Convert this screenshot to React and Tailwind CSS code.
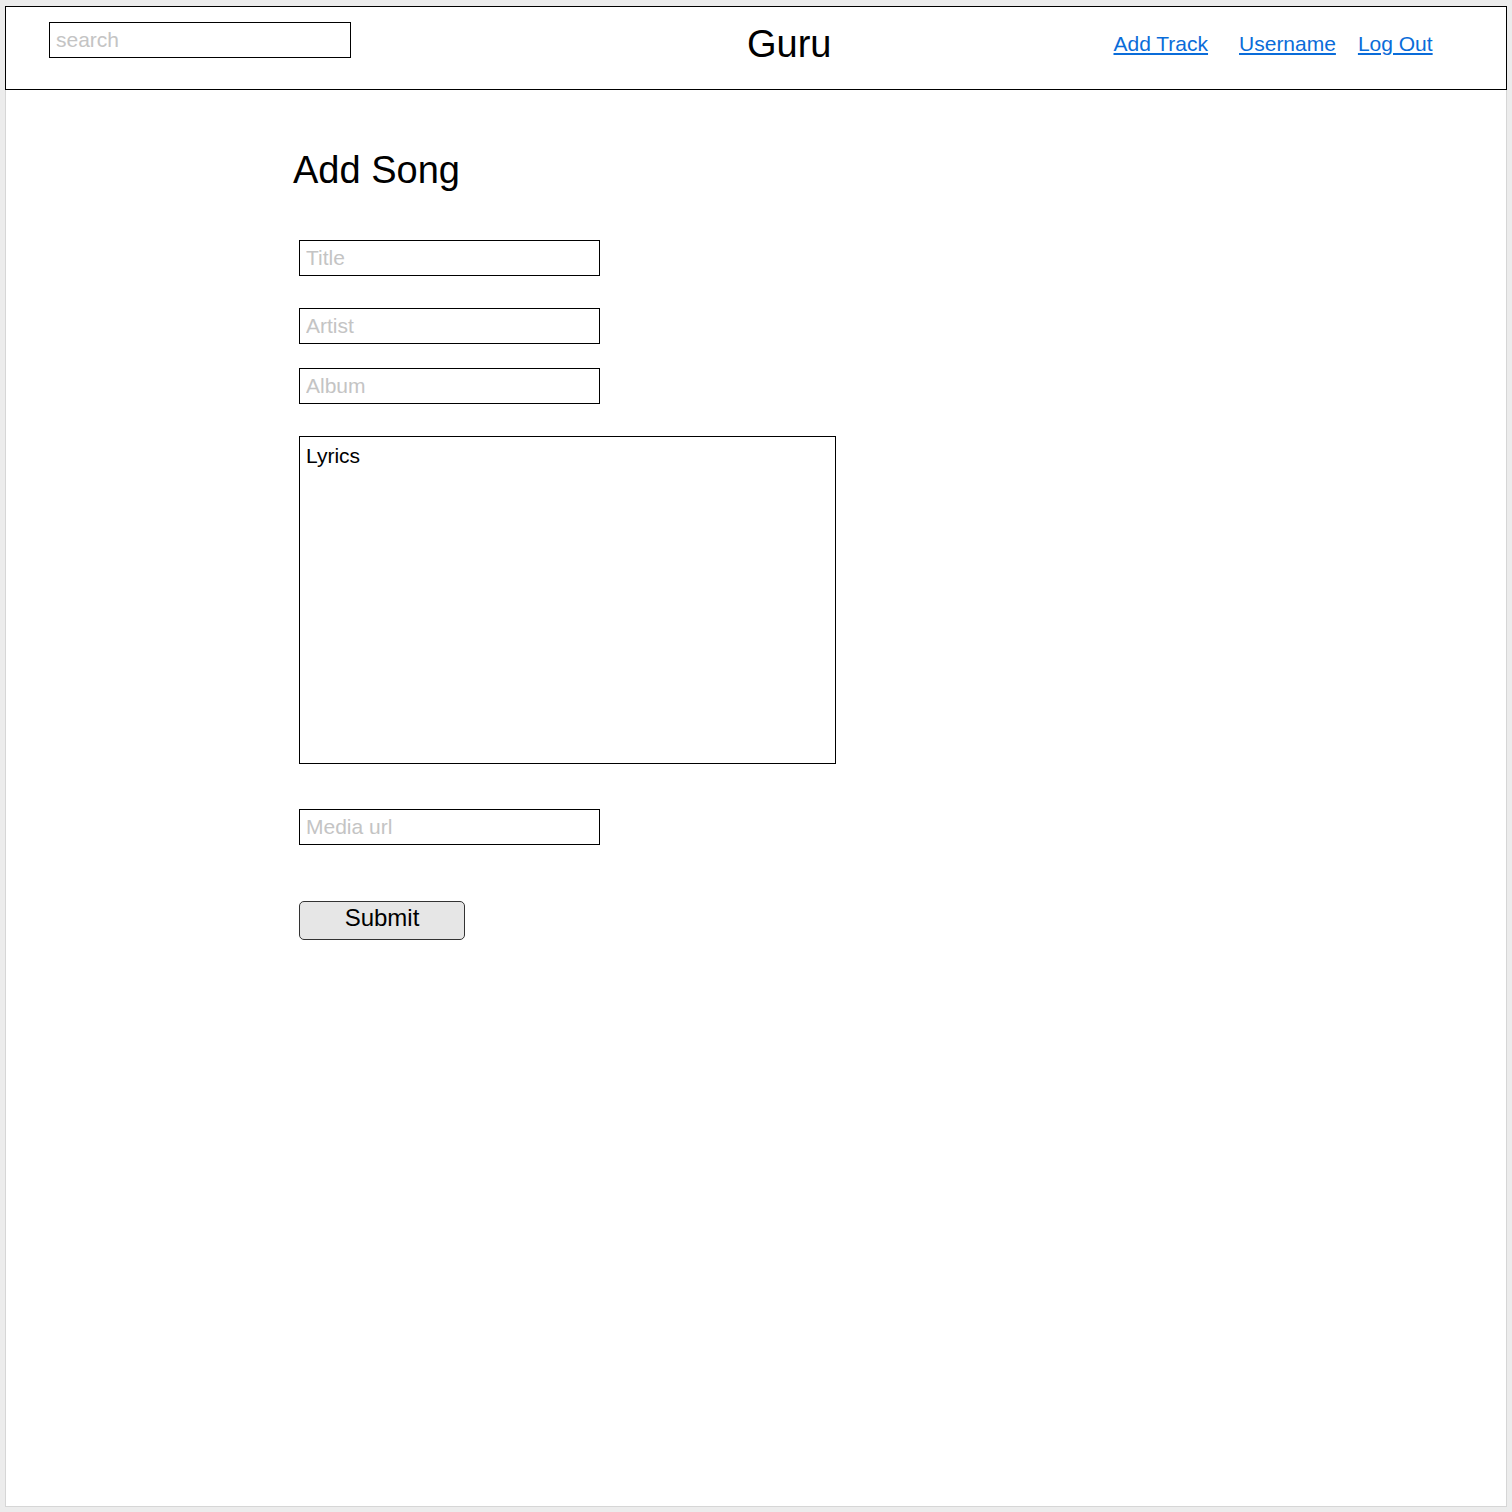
import React from "react";

export default function App() {
  return (
    <div
      className="min-h-screen bg-[#ececec] px-[5px] pt-[6px] pb-[5px]"
      style={{ fontFamily: '"Liberation Sans", Arial, sans-serif' }}
    >
      <div className="w-[1502px] h-[1501px] border border-[#d6d6d6] bg-white">
        {/* Header */}
        <header className="-mx-px -mt-px h-[84px] border border-black flex items-start">
          <input
            type="text"
            placeholder="search"
            className="ml-[43px] mt-[15px] w-[302px] h-[36px] border border-black px-[6px] text-[21px] text-black placeholder:text-[#c4c4c4] outline-none"
          />
          <h1 className="ml-[396px] mt-[15px] text-[38px] leading-[44px] text-black">
            Guru
          </h1>
          <nav className="ml-[282px] mt-[23px] flex items-center text-[21px] leading-[28px] text-[#0a6cd9]">
            <a href="#" className="underline">Add Track</a>
            <a href="#" className="underline ml-[31px]">Username</a>
            <a href="#" className="underline ml-[22px]">Log Out</a>
          </nav>
        </header>

        {/* Add Song form */}
        <main className="pl-[286px] pt-[58px]">
          <h2 className="pl-[1px] text-[38px] leading-[44px] text-black">Add Song</h2>

          <form className="ml-[7px] mt-[48px] flex flex-col items-start">
            <input
              type="text"
              placeholder="Title"
              className="w-[301px] h-[36px] border border-black px-[6px] text-[21px] placeholder:text-[#c4c4c4] outline-none"
            />
            <input
              type="text"
              placeholder="Artist"
              className="mt-[32px] w-[301px] h-[36px] border border-black px-[6px] text-[21px] placeholder:text-[#c4c4c4] outline-none"
            />
            <input
              type="text"
              placeholder="Album"
              className="mt-[24px] w-[301px] h-[36px] border border-black px-[6px] text-[21px] placeholder:text-[#c4c4c4] outline-none"
            />
            <textarea
              placeholder="Lyrics"
              className="mt-[32px] w-[537px] h-[328px] border border-black px-[6px] py-[6px] text-[21px] leading-[26px] placeholder:text-black outline-none resize-none"
            />
            <input
              type="text"
              placeholder="Media url"
              className="mt-[45px] w-[301px] h-[36px] border border-black px-[6px] text-[21px] placeholder:text-[#c4c4c4] outline-none"
            />
            <button
              type="button"
              className="mt-[56px] w-[166px] h-[39px] pb-[5px] rounded-[5px] border border-[#333] bg-[#e6e6e6] text-[24px] leading-none text-black"
            >
              Submit
            </button>
          </form>
        </main>
      </div>
    </div>
  );
}
